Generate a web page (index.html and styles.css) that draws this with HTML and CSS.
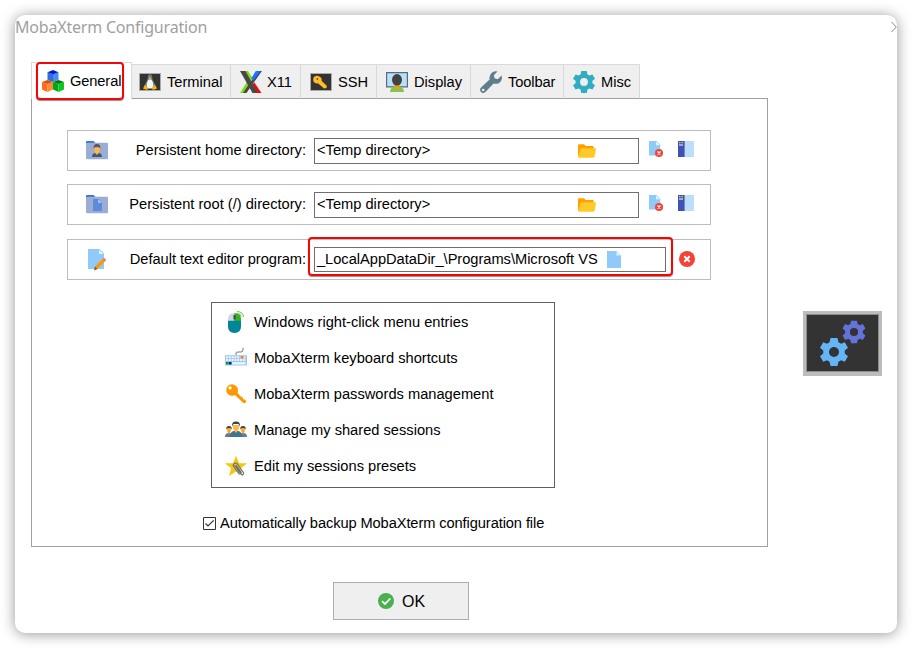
FILE: index.html
```html
<!DOCTYPE html>
<html lang="en">
<head>
<meta charset="utf-8">
<title>MobaXterm Configuration</title>
<link rel="stylesheet" href="styles.css">
</head>
<body>
<svg class="defs" width="0" height="0">
  <symbol id="gear" viewBox="-12 -12 24 24">
    <path fill-rule="evenodd" d="M-3-12H3L3.8-8.3 6.1-7 9.2-8.3 12-3.6 9.2-1.3V1.3L12 3.6 9.2 8.3 6.1 7 3.8 8.3 3 12H-3L-3.8 8.3-6.1 7-9.2 8.3-12 3.6-9.2 1.3V-1.3L-12-3.6-9.2-8.3-6.1-7-3.8-8.3ZM0-4.3A4.3 4.3 0 1 0 0 4.3 4.3 4.3 0 1 0 0-4.3Z"/>
  </symbol>
  <symbol id="openfolder" viewBox="0 0 18 14">
    <path fill="#ffa000" d="M0 1.5Q0 .3 1.2.3H6L7.7 2H14.5Q15.7 2 15.7 3.2V11H1.5L0 12.5Z"/>
    <path fill="#ffca28" d="M3.8 4.3H17.2Q18.2 4.3 18 5.5L16.6 12.6Q16.3 13.8 15 13.8H1.3Q0 13.8.3 12.5L2.5 5.3Q2.8 4.3 3.8 4.3Z"/>
  </symbol>
  <symbol id="pagedel" viewBox="0 0 14 16">
    <path fill="#90caf9" d="M0 0H7.5L11.3 3.8V14.5H0Z"/><path fill="#e1f5fe" d="M7 .5V4.2H11Z"/>
    <circle cx="10" cy="12" r="4" fill="#f44336"/>
    <path d="M8.5 10.5 11.5 13.5M11.5 10.5 8.5 13.5" stroke="#fff" stroke-width="1.3"/>
  </symbol>
  <symbol id="panel" viewBox="0 0 16 16">
    <path fill="#3f51b5" d="M0 0H6V16H0Z"/><path fill="#7986cb" d="M6 0H7V16H6Z"/><path fill="#bbdefb" d="M7 0H16V16H7Z"/>
    <path fill="#9fa8da" d="M1 3H5V5H1Z"/><path fill="#cddc39" d="M1 1H2.5V2.3H1ZM3.5 1H5V2.3H3.5Z"/>
  </symbol>
</svg>
<main class="window">
  <header class="titlebar"><h1>MobaXterm Configuration</h1>
    <svg class="close" viewBox="0 0 6 12"><path d="M.5 1 5.3 6 .5 11" fill="none" stroke="#888"/></svg>
  </header>
  <div class="body">
    <section class="config">
      <nav class="tabs">
        <div class="tab active"><svg class="i22" viewBox="0 0 22 22">
          <path fill="#2f6fdc" d="M5.5 2.2 11 4V12L5.5 10Z"/><path fill="#4c8cf0" d="M11 4 16.5 2.2V10L11 12Z"/><path fill="#0018d8" d="M5.5 2.2 11 0 16.5 2.2 11 4.2Z"/>
          <path fill="#ff6d1a" d="M0 12 5.5 14V22L0 19.5Z"/><path fill="#ff8a3c" d="M5.5 14 11 12V19.5L5.5 22Z"/><path fill="#d95208" d="M0 12 5.5 10 11 12 5.5 14Z"/>
          <path fill="#00a814" d="M11 12 16.5 14V22L11 19.5Z"/><path fill="#09c921" d="M16.5 14 22 12V19.5L16.5 22Z"/><path fill="#007c08" d="M11 12 16.5 10 22 12 16.5 14Z"/>
        </svg><span>General</span></div>
        <div class="tab terminal"><svg class="i22" viewBox="0 0 22 22">
          <path fill="#333" stroke="#aaa" d="M.5 2.5H21.5V19.5H.5Z"/>
          <path fill="#6b7a84" d="M9 4.5Q11 1.8 13 4.5L13.4 8 16 13.5 15.5 17H6.5L6 13.5 8.6 8Z"/>
          <path fill="#f4f7f9" d="M9.6 8.5H12.4Q15.5 13 13.5 17.5H8.5Q6.5 13 9.6 8.5Z"/>
          <path fill="#ffb300" d="M9.5 6.5H12.5L11 9ZM6 13.5 9 17 8.2 19 4 17.5ZM16 13.5 13 17 13.8 19 18 17.5Z"/>
        </svg><span>Terminal</span></div>
        <div class="tab x11"><svg class="i22" viewBox="0 0 22 22">
          <path fill="#80dc12" d="M4 0H8L13 8 10 11ZM7.5 10 10.5 13 4.5 22H0Z"/>
          <path fill="#1f75ff" d="M16 0H22L14.5 10.5 11.5 7.3Z"/>
          <path fill="#e60e0e" d="M14 11 21.5 22H15L11.5 16Z"/>
          <path fill="#484848" d="M0 0H5.5L17.5 22H12.5ZM19.5 0H21.5L6.5 22H3L10 11.5Z"/>
          <path fill="#1f75ff" d="M16 0H20.5L13.5 9.5 11.5 7.3Z"/>
        </svg><span>X11</span></div>
        <div class="tab ssh"><svg class="i22" viewBox="0 0 22 22">
          <path fill="#333" stroke="#aaa" d="M.5 2.5H21.5V19.5H.5Z"/>
          <path fill="#ffbd24" fill-rule="evenodd" d="M8 5A3.8 3.8 0 1 0 8 12.3L14 17.5 16.5 17 16.8 14.8 11.7 10Q12.3 6 8 5ZM7.3 7 8.3 8 7.3 9 6.3 8Z"/>
        </svg><span>SSH</span></div>
        <div class="tab display"><svg class="i22" viewBox="0 0 22 22">
          <path fill="#bbdefb" stroke="#546e7a" stroke-width="1.2" d="M.6 1.6H21.4V15.9H.6Z"/>
          <path fill="#8bc34a" d="M4 21Q4.5 15.5 9 15.5H13Q17.5 15.5 18 21Z"/><path fill="#ff9800" d="M8.5 13H13.5V15.5L11 18 8.5 15.5Z"/>
          <ellipse cx="11" cy="8.8" rx="5" ry="5.8" fill="#424242"/>
        </svg><span>Display</span></div>
        <div class="tab toolbar"><svg class="i22" viewBox="0 0 22 22">
          <path fill="#607d8b" fill-rule="evenodd" d="M17.5.5 13.8 4.3 14.6 7.3 17.7 8.2 21.6 4.5Q23 9.5 18.8 12.2 16.3 13.4 13.6 12.4L5.4 21Q3 22.8 1 21 -.8 18.8 1 16.6L9.6 8.4Q8.8 5 11.3 2.2 14-.6 17.5.5ZM3.2 17.7A1.3 1.3 0 1 0 3.2 20.3 1.3 1.3 0 1 0 3.2 17.7Z"/>
        </svg><span>Toolbar</span></div>
        <div class="tab misc"><svg class="i22 teal"><use href="#gear"/></svg><span>Misc</span></div>
      </nav>
      <div class="panel">
        <div class="row">
          <svg class="i22" viewBox="0 0 22 22"><path fill="#3575d3" d="M0 2Q0 1 1 1H7.5L9.5 3H20V8H0Z"/><rect y="2.700" width="22" height="16.500" rx="1.300" fill="#9aadd2"/><path fill="#455a64" d="M6 17Q6 13.500 9 13L11 14.500 13 13Q16 13.500 16 17Z"/><path fill="#ffb74d" d="M8 8H14Q14 12 12.400 13L11 15 9.600 13Q8 12 8 8Z"/><path fill="#6d5347" d="M7.800 9Q7 4 11 4T14.200 9L13 7H9Z"/></svg>
          <label>Persistent home directory:</label>
          <div class="field"><span>&lt;Temp directory&gt;</span><svg class="browse"><use href="#openfolder"/></svg></div>
          <svg class="del"><use href="#pagedel"/></svg><svg class="side"><use href="#panel"/></svg>
        </div>
        <div class="row">
          <svg class="i22" viewBox="0 0 22 22"><path fill="#3575d3" d="M0 2Q0 1 1 1H7.5L9.5 3H20V8H0Z"/><rect y="2.700" width="22" height="16.500" rx="1.300" fill="#9aadd2"/><path fill="#5c8bd9" d="M7 5H12.500L16 8.500V17H7Z"/><path fill="#c5dcfa" d="M12.300 5.500V8.700H15.500Z"/></svg>
          <label>Persistent root (/) directory:</label>
          <div class="field"><span>&lt;Temp directory&gt;</span><svg class="browse"><use href="#openfolder"/></svg></div>
          <svg class="del"><use href="#pagedel"/></svg><svg class="side"><use href="#panel"/></svg>
        </div>
        <div class="row editor">
          <svg class="i22" viewBox="0 0 22 22"><path fill="#90caf9" d="M2 0H13.5L18 4.5V20H2Z"/><path fill="#e1f5fe" d="M13 .7V5H17.3Z"/><path fill="#ff9800" d="M9 17.5 16.5 10 19 12.5 11.5 20Z"/><path fill="#e57373" d="M16.5 10 18 8.700 20.300 11 19 12.500Z"/><path fill="#795548" d="M9 17.500 8 21.400 11.500 20Z"/></svg>
          <label>Default text editor program:</label>
          <div class="field wide"><span>_LocalAppDataDir_\Programs\Microsoft VS</span><svg class="page" viewBox="0 0 14 17"><path fill="#90caf9" d="M0 0H9.5L14 4.5V17H0Z"/><path fill="#e1f5fe" d="M9.500 .6V4.500H13.400Z"/></svg></div>
          <svg class="clear" viewBox="0 0 16 16"><circle cx="8" cy="8" r="8" fill="#f44336"/><path d="M5.3 5.3 10.7 10.7M10.7 5.3 5.3 10.7" stroke="#fff" stroke-width="2"/></svg>
        </div>
        <ul class="actions">
          <li><svg class="i22" viewBox="0 0 22 22"><path fill="#008795" d="M3 9H16V15.5Q16 22 9.5 22T3 15.5Z"/><path fill="#cfd8dc" d="M3 9.8V8Q3 2 9.5 2V9.8Z"/><path fill="#39b21a" d="M9.5 2Q16 2 16 8V9.8H9.5Z"/><path fill="#37474f" d="M8.500 4H10.500V8.500H8.500Z"/><path fill="none" stroke="#63c34b" d="M12 .6Q18 .5 18.500 6M12.500 2.500Q15.700 2.500 16.200 5.500"/></svg><span>Windows right-click menu entries</span></li>
          <li><svg class="i22" viewBox="0 0 22 22"><path fill="none" stroke="#607d8b" d="M11 8V6Q11 5 13 5H16Q18 5 18 2.500V.8"/><path fill="#a3c8e6" d="M0 8.200H22V18.500H0Z"/><path stroke="#e7f6ff" stroke-width="2" stroke-dasharray="2 .8" d="M1 10.300H21M1 13.100H21"/><path fill="#e1f5fe" d="M7 15.100H20.500V17.500H7Z"/><path fill="#ff7043" d="M15.500 9H18.500V11.300H15.500Z"/><path fill="#00a030" d="M1 15H3.700V17.500H1Z"/><path fill="#0018d0" d="M4 15H6.500V17.500H4Z"/></svg><span>MobaXterm keyboard shortcuts</span></li>
          <li><svg class="i22" viewBox="0 0 22 22"><path fill="#ff9800" fill-rule="evenodd" d="M7 1.200A5.800 5.800 0 1 0 8.500 12.600L10.300 12.300 18 19.800Q19.200 20.700 20.500 19.800 21.800 18.600 20.800 17.400L19.500 16.300 18.500 16.500 17.300 14 15.800 13.500 12.600 10Q14 5 10.700 2.700 9 1.200 7 1.200ZM5 3.300A1.600 1.600 0 1 1 5 6.500 1.600 1.600 0 1 1 5 3.300Z"/></svg><span>MobaXterm passwords management</span></li>
          <li><svg class="i22" viewBox="0 0 22 22"><path fill="#607d8b" d="M0 18Q0 14 4 14T8 18ZM14 18Q14 14 18 14T22 18Z"/><path fill="#ffa726" d="M1.8 9H6.2Q6.2 13 4 15 1.8 13 1.8 9ZM15.8 9H20.2Q20.2 13 18 15 15.8 13 15.8 9Z"/><path fill="#424242" d="M1.3 10.5Q.8 7 4 7T6.7 10.5L5.5 9H2.5ZM15.3 10.5Q14.8 7 18 7T20.7 10.5L19.5 9H16.5Z"/><path fill="#3f7494" d="M5 18Q5 12.5 9 12H13Q17 12.5 17 18Z"/><path fill="#ffb74d" d="M7.8 6H14.2Q14.2 10.5 12.5 12L11 14 9.5 12Q7.8 10.5 7.8 6Z"/><path fill="#424242" d="M7.2 7.5Q6.3 2.5 11 2.5T14.8 7.5L13.5 5H8.5Z"/></svg><span>Manage my shared sessions</span></li>
          <li><svg class="i22" viewBox="0 0 22 22"><path fill="#f5c60a" d="M11 .8 14 8.300H22L15.800 13.300 18 21 11 16.600 4 21 6.200 13.300 0 8.300H8Z"/><path fill="none" stroke="#5f6b93" stroke-width="1.100" stroke-linecap="round" d="M10 10.500 15.800 18.900Q17.300 20.700 18.300 19.300T17.700 16.500L12.400 9Q10.500 7.200 9 8.700T9 11.800L14.200 19.200M11.400 10.700 16 17.300"/></svg><span>Edit my sessions presets</span></li>
        </ul>
        <div class="backup"><svg class="check" viewBox="0 0 13 13"><path fill="#fff" stroke="#333" d="M.5.5H12.5V12.5H.5Z"/><path fill="none" stroke="#333" stroke-width="1.2" d="M2.5 6.5 5 9 10.7 3.3"/></svg><span>Automatically backup MobaXterm configuration file</span></div>
      </div>
    </section>
    <svg class="badge" viewBox="0 0 79 65">
      <path fill="#bcbcbc" d="M0 0H79V65H0Z"/><path fill="#333" stroke="#8c8c8c" d="M3.500 3.500H75.500V60.500H3.500Z"/>
      <use href="#gear" x="17" y="27" width="28" height="28" fill="#64b5f6"/><use href="#gear" x="39.500" y="9.500" width="23" height="23" fill="#6374d9"/>
    </svg>
  </div>
  <button class="ok"><svg viewBox="0 0 16 16"><circle cx="8" cy="8" r="8" fill="#4caf50"/><path d="M4 8.2 7 11 12.3 5.5" fill="none" stroke="#fff" stroke-width="1.8"/></svg><span>OK</span></button>
  <div class="mark mark-tab"></div>
  <div class="mark mark-editor"></div>
</main>
</body>
</html>
```

FILE: styles.css
```css
* { box-sizing: border-box; }
body { margin: 0; padding: 15px; background: #fff; overflow: hidden; font: 14.67px/18px "Liberation Sans", Arial, sans-serif; color: #000; }
svg { display: block; flex: none; }
.defs { position: absolute; }
span, label { white-space: nowrap; }
.window { position: relative; width: 882px; height: 618px; border-radius: 10px; background: #fff; box-shadow: 0 1px 14px rgba(0, 0, 0, .42); }
.titlebar { height: 47px; display: flex; justify-content: space-between; }
.titlebar h1 { margin: 0; font: 400 16px/24px "Noto Sans", sans-serif; letter-spacing: -.2px; color: #a0a0a0; }
.close { width: 6px; height: 12px; margin-top: 6px; }
.body { display: flex; padding-left: 16px; }
.config { width: 737px; }
.tabs { display: flex; align-items: flex-end; height: 37px; position: relative; z-index: 1; }
.tab { display: flex; align-items: center; height: 35px; padding: 1px 0 0 8px; gap: 6px; background: #efefef; border-top: 1px solid #d9d9d9; border-right: 1px solid #d9d9d9; border-bottom: 1px solid #a0a0a0; }
.tab.active { width: 101px; height: 37px; padding: 0 0 0 10px; background: #fff; border-left: 1px solid #d9d9d9; border-bottom: 0; }
.active span { letter-spacing: -.12px; }
.terminal { width: 99px; padding-left: 7px; }
.x11 { width: 70px; padding-left: 9px; }
.x11 span { margin-left: -1px; }
.ssh { width: 76px; padding-left: 9px; }
.display { width: 94px; padding-left: 9px; }
.toolbar { width: 93px; padding-left: 9px; }
.toolbar span { letter-spacing: -.12px; }
.misc { width: 76px; padding-left: 9px; }
.i22 { width: 22px; height: 22px; }
.teal { fill: #32acc0; }
.panel { height: 449px; margin-top: -1px; padding: 31px 56px 0 35px; border: 1px solid #a0a0a0; }
.row { display: flex; align-items: center; width: 644px; height: 41px; margin-bottom: 13px; padding-left: 18px; border: 1px solid #bdbdbd; }
.row:nth-child(2) { margin-bottom: 14px; }
.row label { width: 198px; text-align: right; margin-right: 8px; margin-top: -2px; }
.field { display: flex; align-items: center; width: 325px; height: 26px; padding: 0 42px 0 2px; justify-content: space-between; border: 1px solid #6f6f6f; }
.field span { margin-top: -2px; }
.field.wide { width: 352px; height: 25px; padding-right: 44px; }
.wide span { margin-top: -1px; letter-spacing: -.03px; }
.editor label { letter-spacing: -.05px; }
.browse { width: 18px; height: 14px; }
.page { width: 14px; height: 17px; }
.del { width: 14px; height: 16px; margin: -3px 15px 0 10px; }
.side { width: 16px; height: 16px; margin-top: -3px; }
.clear { width: 16px; height: 16px; margin: -1px 0 0 13px; }
.actions { list-style: none; width: 344px; height: 186px; margin: 22px 0 0 144px; padding: 1px 0 0 13px; border: 1px solid #5f5f5f; }
.actions li { display: flex; align-items: center; gap: 7px; height: 36px; }
.backup { display: flex; align-items: center; gap: 4px; margin: 26px 0 0 136px; letter-spacing: -.1px; }
.check { width: 13px; height: 13px; }
.badge { width: 79px; height: 65px; margin: 249px 0 0 35px; }
.ok { display: flex; align-items: center; gap: 8px; width: 136px; height: 38px; margin: 35px 0 0 318px; padding: 1px 0 0 44px; border: 1px solid #adadad; background: #efefef; font: 16px/20px "Liberation Sans", Arial, sans-serif; color: #000; }
.ok svg { width: 16px; height: 16px; margin-top: -1px; }
.mark { position: absolute; z-index: 2; border: 2px solid #f60505; border-radius: 4px; box-shadow: 0 1px 1px rgba(0, 0, 0, .45); }
.mark-tab { left: 21px; top: 47px; width: 88px; height: 38px; }
.mark-editor { left: 293px; top: 222px; width: 365px; height: 39px; }
```
